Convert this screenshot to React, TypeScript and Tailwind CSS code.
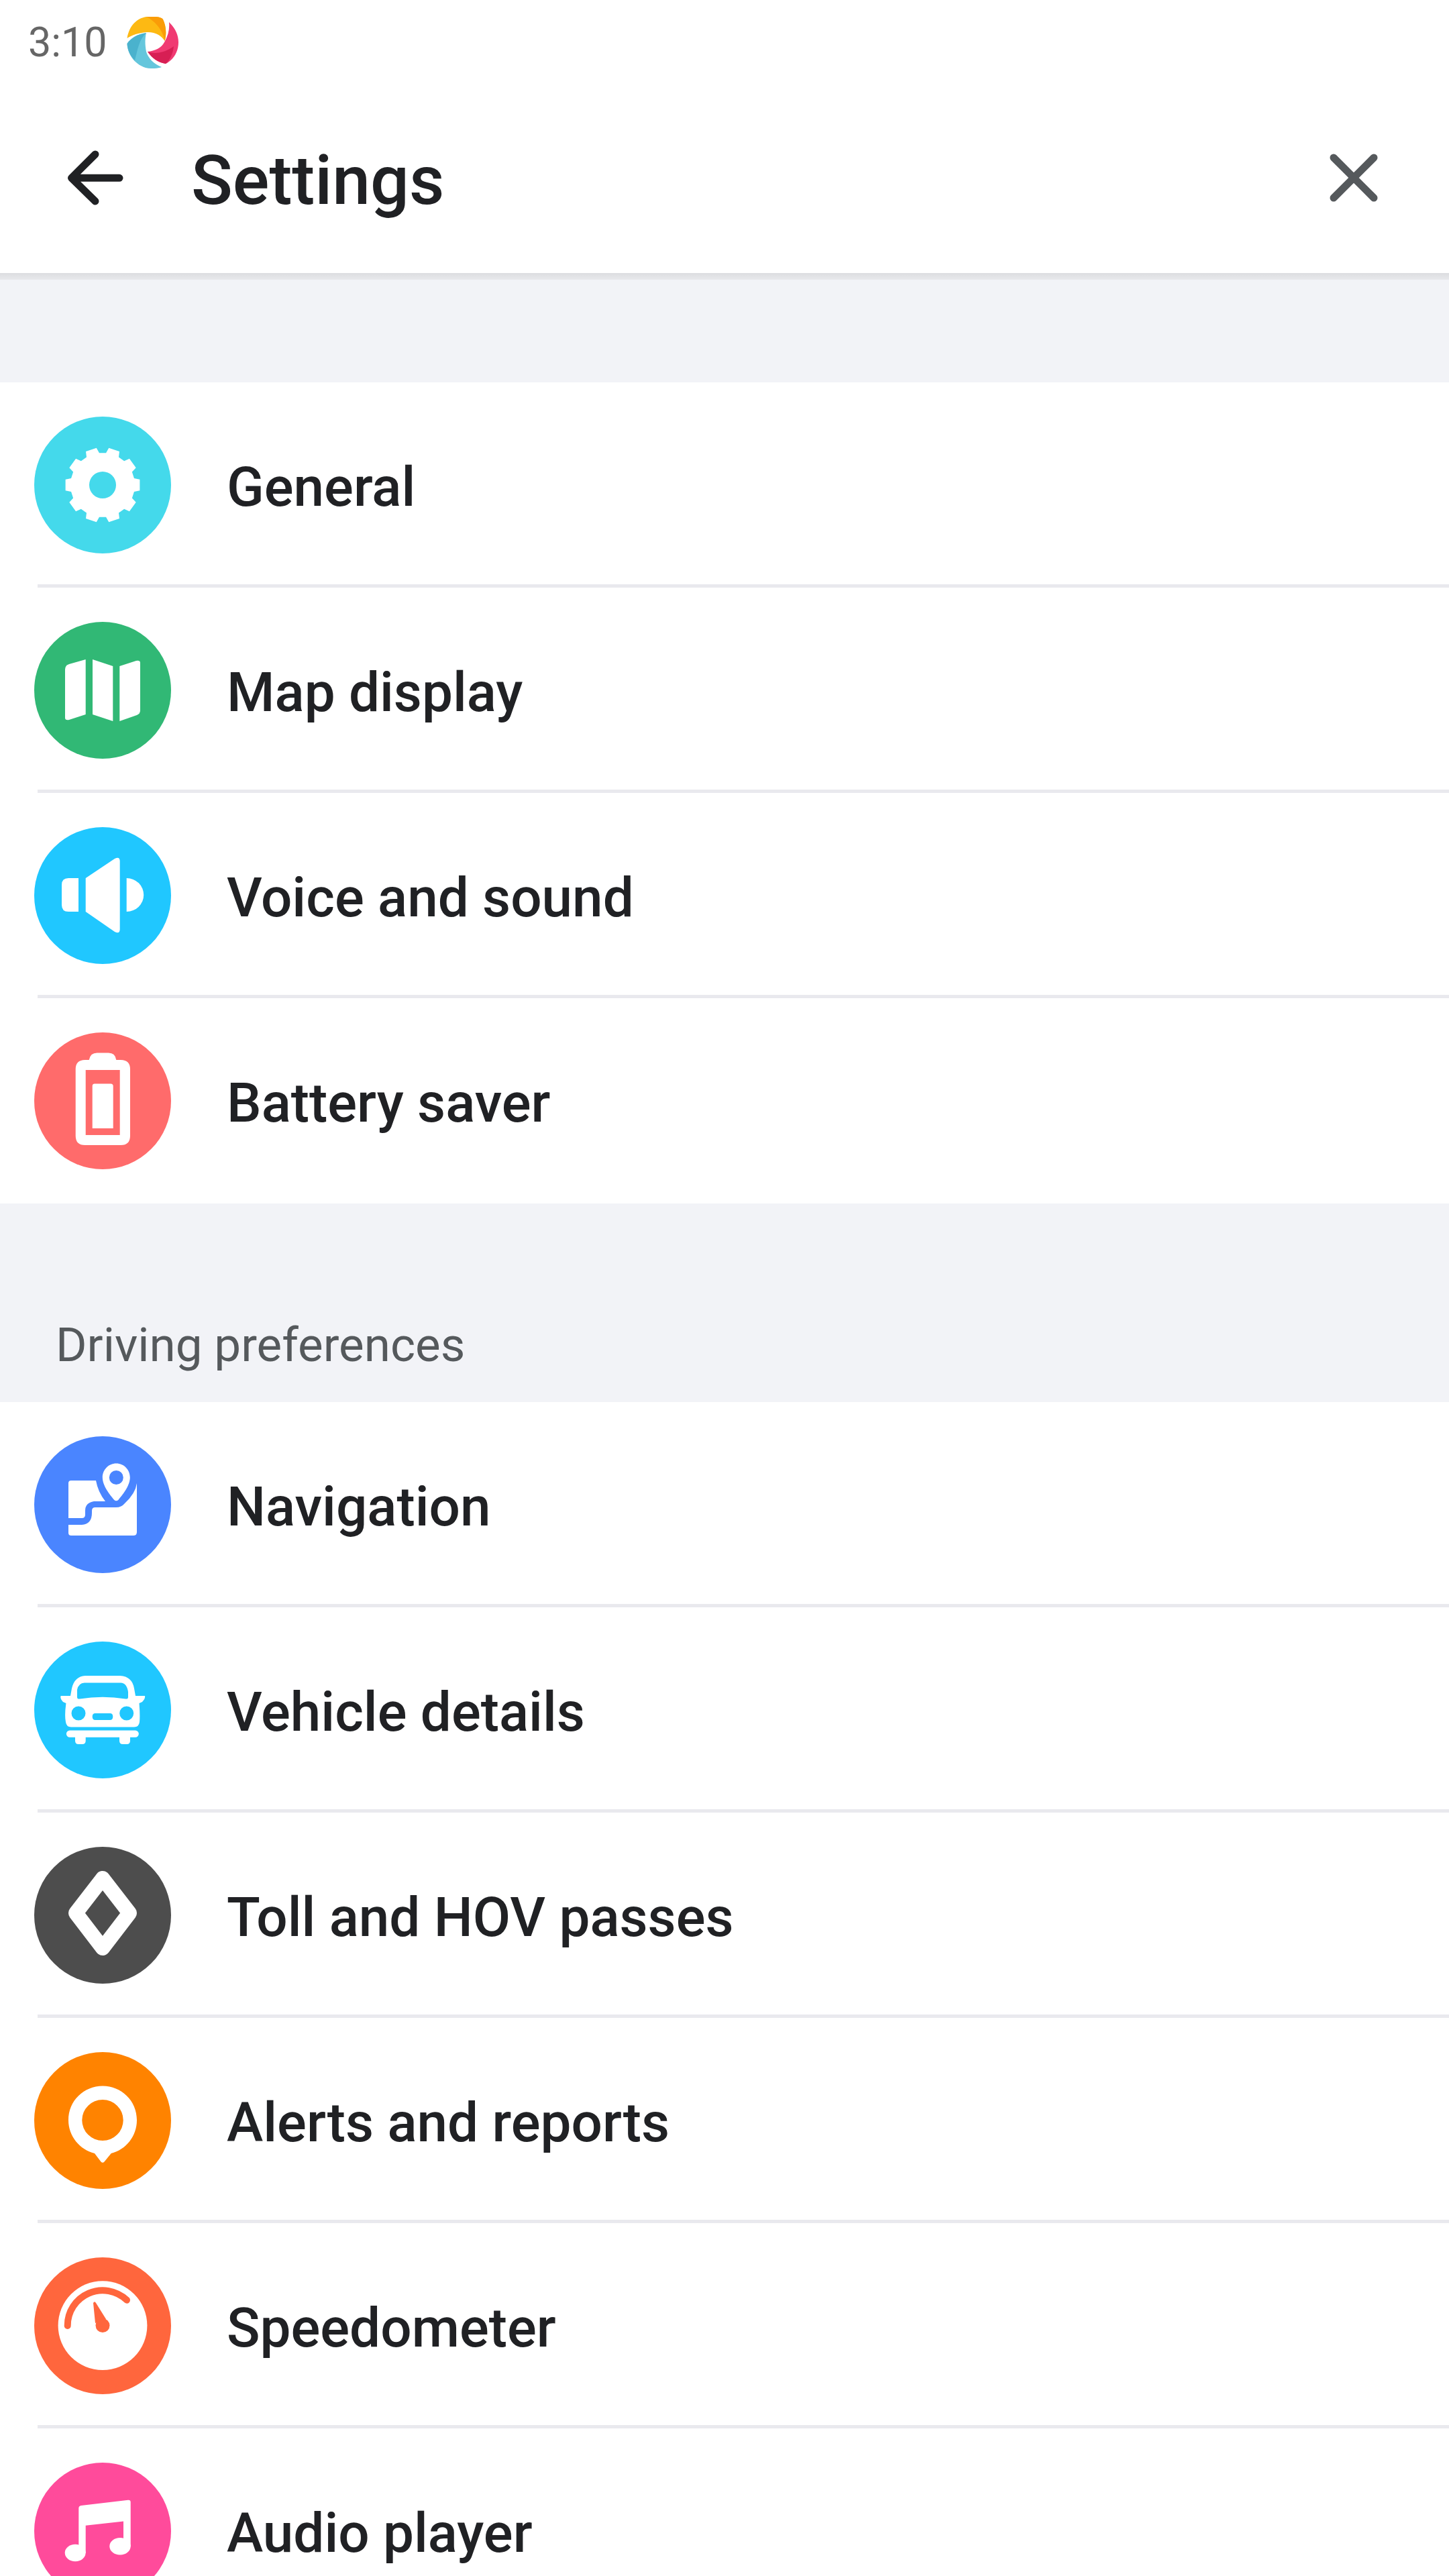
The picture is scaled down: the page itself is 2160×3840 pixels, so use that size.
import React from "react";

const tooth = () => {
  let d = "";
  for (let k = 0; k < 10; k++) {
    const a = (k * 36 * Math.PI) / 180;
    const p = (r: number, o: number) => {
      const t = a + (o * Math.PI) / 180;
      return `${(102 + r * Math.cos(t)).toFixed(2)} ${(102 + r * Math.sin(t)).toFixed(2)}`;
    };
    d += `${k === 0 ? "M" : "L"}${p(48, -12)} L${p(56, -8.5)} L${p(56, 8.5)} L${p(48, 12)} `;
  }
  return d + "Z";
};

const Gear = () => <path fillRule="evenodd" fill="#fff" d={`${tooth()} M122 102a20 20 0 1 0-40 0a20 20 0 1 0 40 0Z`} />;
const MapIcon = () => (
  <g fill="#fff">
    <path d="M46 71q0-6 6-8L76.7 56V138L52 146q-6 1-6-3Z" />
    <path d="M87 56L117.3 66V148L87 138Z" />
    <path d="M127.3 66L152 58q6-1 6 3V132q0 5-5 7L127.3 148Z" />
  </g>
);
const Speaker = () => (
  <g fill="#fff">
    <path d="M66 76V126H51q-10 0-10-10V86q0-10 10-10Z" />
    <path d="M76.7 76L120 47q7.700-4 7.700 4V152q0 8-7.700 4L76.7 126Z" />
    <path d="M137.700 76a25.500 25 0 0 1 0 50Z" />
  </g>
);
const Battery = () => (
  <g fill="#fff">
    <path
      fillRule="evenodd"
      d="M81.700 41q2-10.400 12-10.400h17q10 0 11.600 10.400h6.700q14 0 14 14V154q0 14-14 14H75.700q-14 0-14-14V55q0-14 14-14ZM76.700 56V153H127.700V56Z"
    />
    <path d="M90 76.500H114q3.700 0 3.700 3.500V143H86.700V80q0-3.500 3.300-3.500Z" />
  </g>
);
const Nav = () => (
  <g fill="#fff">
    <path d="M51 70q0-4 4-4H92q3 17 14 31H89q-13 2-13 14V117q0 5-5 5H51Z" />
    <path d="M51 132H71q15-1 15-18V111q0-5 5-5H122q8 0 13-6 16-15 18-30V143q0 5-5 5H55q-4 0-4-4Z" />
    <path
      fillRule="evenodd"
      d="M122.300 40.600c-11.500 0-20.500 9.400-20.500 21 0 12 11 26 17.500 33.400q3 2.600 6 0c6.500-7.400 17.500-21.400 17.500-33.400 0-11.600-9-21-20.500-21ZM122.300 51a10.500 10.500 0 1 1 0 21a10.500 10.500 0 1 1 0-21Z"
    />
  </g>
);
const Car = () => (
  <g fill="#fff">
    <path
      fillRule="evenodd"
      d="M76 51H128Q146 52 149 70L151 81H165Q166 85 161 90L156.500 92Q158 110 157 120 156 127.500 149 127.500H55Q48 127.500 47 120 45 110 47.500 92L43 90Q38 85 39.700 81H54L56 70Q60 52 76 51ZM75 61.600Q66 62 64 72V83Q64 86 68 85.500 102 80 136 85.500 140 86 140 83V75Q138 62 129 61.600ZM66 96.500a10.500 10.500 0 1 0 0 21a10.500 10.500 0 1 0 0-21ZM137.700 96.500a10.500 10.500 0 1 0 0 21a10.500 10.500 0 1 0 0-21ZM91 107Q86.700 107 86.700 112T91 117H113Q117.300 117 117.300 112T113 107Z"
    />
    <path d="M53 132.400H150.700a5.100 5.100 0 0 1 0 10.300H143V148q0 5-5 5H132q-5 0-5-5V142.700H76.700V148q0 5-5 5H66q-5 0-5-5V142.700H53a5.100 5.100 0 0 1 0-10.300Z" />
  </g>
);
const Toll = () => <path d="M102 47L142 98.700L102 151L62 98.700Z" fill="none" stroke="#fff" strokeWidth="22" strokeLinejoin="round" />;
const Alert = () => (
  <path
    fillRule="evenodd"
    fill="#fff"
    d="M102 50.500c-28 0-51 22-51 51 0 24 17 44 39 49.500l9.500 12.500q2.500 2.500 5 0L114.700 151c22-5.500 38.300-25.500 38.300-49.500 0-29-23-51-51-51ZM102 71a30.700 30.500 0 1 1 0 61a30.700 30.500 0 1 1 0-61Z"
  />
);
const Speed = () => (
  <g>
    <circle cx="102" cy="101.600" r="66.400" fill="#fff" />
    <path d="M49.700 102A52.300 52.300 0 0 1 138 63.700" fill="none" stroke="#ff663d" strokeWidth="10" strokeLinecap="round" />
    <path d="M88 68Q90 64.500 92 68L107 92L91 98Z" fill="#ff663d" />
    <circle cx="102" cy="101.600" r="10.500" fill="#ff663d" />
  </g>
);
const Music = () => (
  <g fill="#fff">
    <path d="M66.300 68Q66.300 64.500 70 64L140 55.800Q143.700 55.500 143.700 59V125H133V87.500L76.700 93.700V135H66.300Z" />
    <ellipse cx="61.200" cy="134.500" rx="15.500" ry="12.700" />
    <ellipse cx="128" cy="124.700" rx="15.700" ry="12.700" />
  </g>
);

type Row = { label: string; bg: string; icon: React.ReactNode };

const top: Row[] = [
  { label: "General", bg: "bg-[#44d9eb]", icon: <Gear /> },
  { label: "Map display", bg: "bg-[#31b875]", icon: <MapIcon /> },
  { label: "Voice and sound", bg: "bg-[#20c7ff]", icon: <Speaker /> },
  { label: "Battery saver", bg: "bg-[#ff6b6b]", icon: <Battery /> },
];
const driving: Row[] = [
  { label: "Navigation", bg: "bg-[#4a85ff]", icon: <Nav /> },
  { label: "Vehicle details", bg: "bg-[#20c7ff]", icon: <Car /> },
  { label: "Toll and HOV passes", bg: "bg-[#4d4d4d]", icon: <Toll /> },
  { label: "Alerts and reports", bg: "bg-[#ff8300]", icon: <Alert /> },
  { label: "Speedometer", bg: "bg-[#ff663d]", icon: <Speed /> },
  { label: "Audio player", bg: "bg-[#ff4b9b]", icon: <Music /> },
];

function SettingRow({ row, last }: { row: Row; last: boolean }) {
  return (
    <div className="relative flex h-[306px] shrink-0 items-start bg-white pl-[51px] pt-[51px]">
      <div className={`flex h-[204px] w-[204px] shrink-0 items-center justify-center rounded-full ${row.bg}`}>
        <svg viewBox="0 0 204 204" className="h-[204px] w-[204px]">
          {row.icon}
        </svg>
      </div>
      <span className="ml-[83px] mt-[55px] text-[81.8px] font-medium leading-[100px] text-[#202124]">{row.label}</span>
      {!last && <div className="absolute bottom-0 left-[56px] right-0 h-[5px] bg-[#e9e9ee]" />}
    </div>
  );
}

function Logo() {
  return (
    <svg viewBox="0 0 77 77" className="ml-[29px] h-[77px] w-[77px]">
      <path d="M0.500 32C4 12 16 2 29 0C40-1 52 0 54 4C58 12 60 25 56.500 36C52 28 42 22 29 23C18 24 8 27 0.500 32Z" fill="#fdb913" />
      <path d="M29 0C40-1 52 0 54 4C58 12 60 25 56.500 36C54 20 42 6 29 0Z" fill="#fa9c08" />
      <path d="M63 8C72 17 77 27 77 38C77 52 70 64 58 70C46 68 38 62 31 52C42 51 52 46 56 38C62 28 64 18 63 8Z" fill="#f03a72" />
      <path d="M31 52C42 56 56 54 70 44C69 54 65 64 58 70C46 68 38 62 31 52Z" fill="#d71f54" />
      <path d="M29 24C15 26 6 32 0.500 40C1 54 10 70 28 76C38 78 46 77 52 75C40 70 32 62 29 52C27 42 27 32 29 24Z" fill="#64c6dc" />
      <path d="M29 24C15 26 6 32 0.500 40C1 50 5 58 12 65C16 50 18 34 29 24Z" fill="#41abc8" opacity="0.75" />
    </svg>
  );
}

export default function App() {
  return (
    <div className="flex h-[3840px] w-[2160px] flex-col overflow-hidden bg-[#f2f3f7] font-['Roboto',sans-serif]">
      <div className="flex h-[126px] shrink-0 items-center bg-white pl-[42px]">
        <span className="text-[61px] leading-none text-[#666666]">3:10</span>
        <Logo />
      </div>
      <div className="flex h-[281px] shrink-0 items-center bg-white pl-[92px] pr-[106px]">
        <svg viewBox="0 0 100 100" className="h-[100px] w-[100px] shrink-0" fill="none" stroke="#202124" strokeWidth="11" strokeLinecap="round" strokeLinejoin="round">
          <path d="M86 48.300H14.500M50 13L14.500 48.300L50 83" />
        </svg>
        <span className="ml-[93px] mt-[4px] flex-1 text-[102px] font-medium leading-none text-[#202124]">Settings</span>
        <svg viewBox="0 0 72 72" className="mb-[3px] h-[72px] w-[72px] shrink-0" fill="none" stroke="#55595c" strokeWidth="11" strokeLinecap="round">
          <path d="M6 6L66 66M66 6L6 66" />
        </svg>
      </div>
      <div className="h-[10px] shrink-0 bg-linear-to-b from-[#dcdde0] to-[#e8e9ec]" />
      <div className="h-[153px] shrink-0" />
      {top.map((r, i) => (
        <SettingRow key={r.label} row={r} last={i === top.length - 1} />
      ))}
      <div className="flex h-[296px] shrink-0 items-end pb-[40px] pl-[83px] text-[71px] leading-[90px] text-[#55595c]">Driving preferences</div>
      {driving.map((r, i) => (
        <SettingRow key={r.label} row={r} last={i === driving.length - 1} />
      ))}
    </div>
  );
}
